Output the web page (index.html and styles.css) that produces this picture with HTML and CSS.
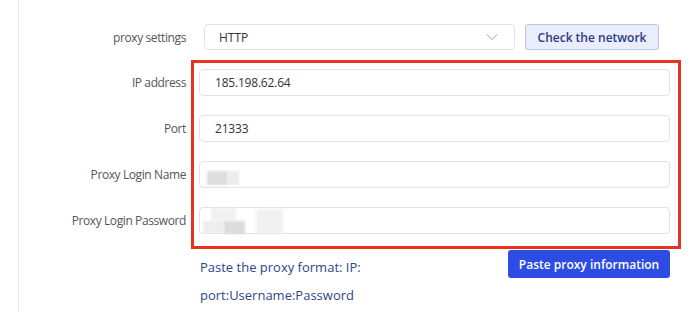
FILE: index.html
```html
<!DOCTYPE html>
<html lang="en">
<head>
    <meta charset="UTF-8">
    <meta name="viewport" content="width=device-width, initial-scale=1.0">
    <title>Proxy settings</title>
    <link rel="stylesheet" href="styles.css">
</head>
<body>
    <div class="panel">
        <div class="form">
            <div class="row first">
                <label class="label">proxy settings</label>
                <div class="control">
                    <div class="select">
                        <span>HTTP</span>
                        <svg class="arrow" width="12" height="8" viewBox="0 0 12 8"><path d="M1 1.5 L6 6.5 L11 1.5" fill="none" stroke="#c4c4c4" stroke-width="1.1"/></svg>
                    </div>
                    <div class="btn light">Check the network</div>
                </div>
            </div>
            <div class="row">
                <label class="label">IP address</label>
                <div class="control"><div class="field">185.198.62.64</div></div>
            </div>
            <div class="row">
                <label class="label">Port</label>
                <div class="control"><div class="field">21333</div></div>
            </div>
            <div class="row">
                <label class="label">Proxy Login Name</label>
                <div class="control">
                    <div class="field blurred">
                        <span class="blot b1"></span>
                        <span class="blot b2"></span>
                    </div>
                </div>
            </div>
            <div class="row">
                <label class="label">Proxy Login Password</label>
                <div class="control">
                    <div class="field blurred">
                        <span class="blot b3"></span>
                        <span class="blot b4"></span>
                        <span class="blot b5"></span>
                        <span class="blot b6"></span>
                    </div>
                </div>
            </div>
            <div class="row paste">
                <span class="label"></span>
                <div class="control">
                    <p class="hint">Paste the proxy format: IP: port:Username:Password</p>
                    <div class="btn primary">Paste proxy information</div>
                </div>
            </div>
        </div>
        <!-- annotation box drawn over the fields -->
        <div class="mark"></div>
    </div>
</body>
</html>
```

FILE: styles.css
```css
*{margin: 0; padding: 0; box-sizing: border-box;}
body{
    width: 690px;
    height: 312px;
    background: #fff;
    font-family: "Segoe UI", "Open Sans", "Noto Sans", sans-serif;
    overflow: hidden;
}
.panel{
    position: relative;
    margin-left: 18px;
    height: 312px;
    border-left: 1px solid #e8e8e8;
    padding-top: 24px;
}
.row{
    display: flex;
    align-items: center;
    margin-bottom: 19px;
}
.label{
    width: 168px;
    flex: none;
    text-align: right;
    font-size: 12px;
    letter-spacing: -0.4px;
    color: #555;
    padding-right: 1px;
}
.control{
    margin-left: 12px;
    width: 471px;
    display: flex;
    align-items: center;
}
.select{
    margin-left: 5px;
    width: 311px;
    height: 26px;
    border: 1px solid #e2e2e2;
    border-radius: 4px;
    display: flex;
    align-items: center;
    justify-content: space-between;
    padding: 0 16px 0 14px;
    font-size: 12px;
    color: #333;
}
.btn{
    height: 27px;
    border-radius: 3px;
    font-size: 12px;
    font-weight: 600;
    display: flex;
    align-items: center;
    justify-content: center;
}
.btn.light{
    margin-left: 10px;
    width: 134px;
    height: 26px;
    background: #e9edfc;
    border: 1px solid #b9c3ee;
    color: #2d3b86;
}
.field{
    width: 471px;
    height: 27px;
    border: 1px solid #e2e2e2;
    border-radius: 4px;
    padding-left: 15px;
    font-size: 12px;
    letter-spacing: -0.2px;
    color: #333;
    display: flex;
    align-items: center;
}
.blurred{
    position: relative;
    padding: 0;
}
.blot{
    position: absolute;
    filter: blur(1px);
}
.b1{left: 7px; top: 9px; width: 21px; height: 14px; background: #dedede;}
.b2{left: 28px; top: 9px; width: 11px; height: 14px; background: #ececec;}
.b3{left: 11px; top: 0; width: 25px; height: 13px; background: #f1f1f1;}
.b4{left: 3px; top: 13px; width: 21px; height: 12px; background: #ededed;}
.b5{left: 24px; top: 13px; width: 21px; height: 13px; background: #dcdcdc;}
.b6{left: 56px; top: 1px; width: 27px; height: 25px; background: #f1f1f1;}
.paste{
    align-items: flex-start;
    margin-top: -3px;
}
.paste .control{
    justify-content: space-between;
    align-items: flex-start;
}
.hint{
    width: 190px;
    margin-left: 1px;
    margin-top: 3px;
    font-size: 13px;
    line-height: 28px;
    color: #33458a;
}
.btn.primary{
    width: 162px;
    height: 28px;
    background: #2c4ce4;
    color: #fff;
    font-size: 12px;
}
.mark{
    position: absolute;
    left: 172px;
    top: 60px;
    width: 490px;
    height: 189px;
    border: 3px solid #e8321f;
    pointer-events: none;
}
```
